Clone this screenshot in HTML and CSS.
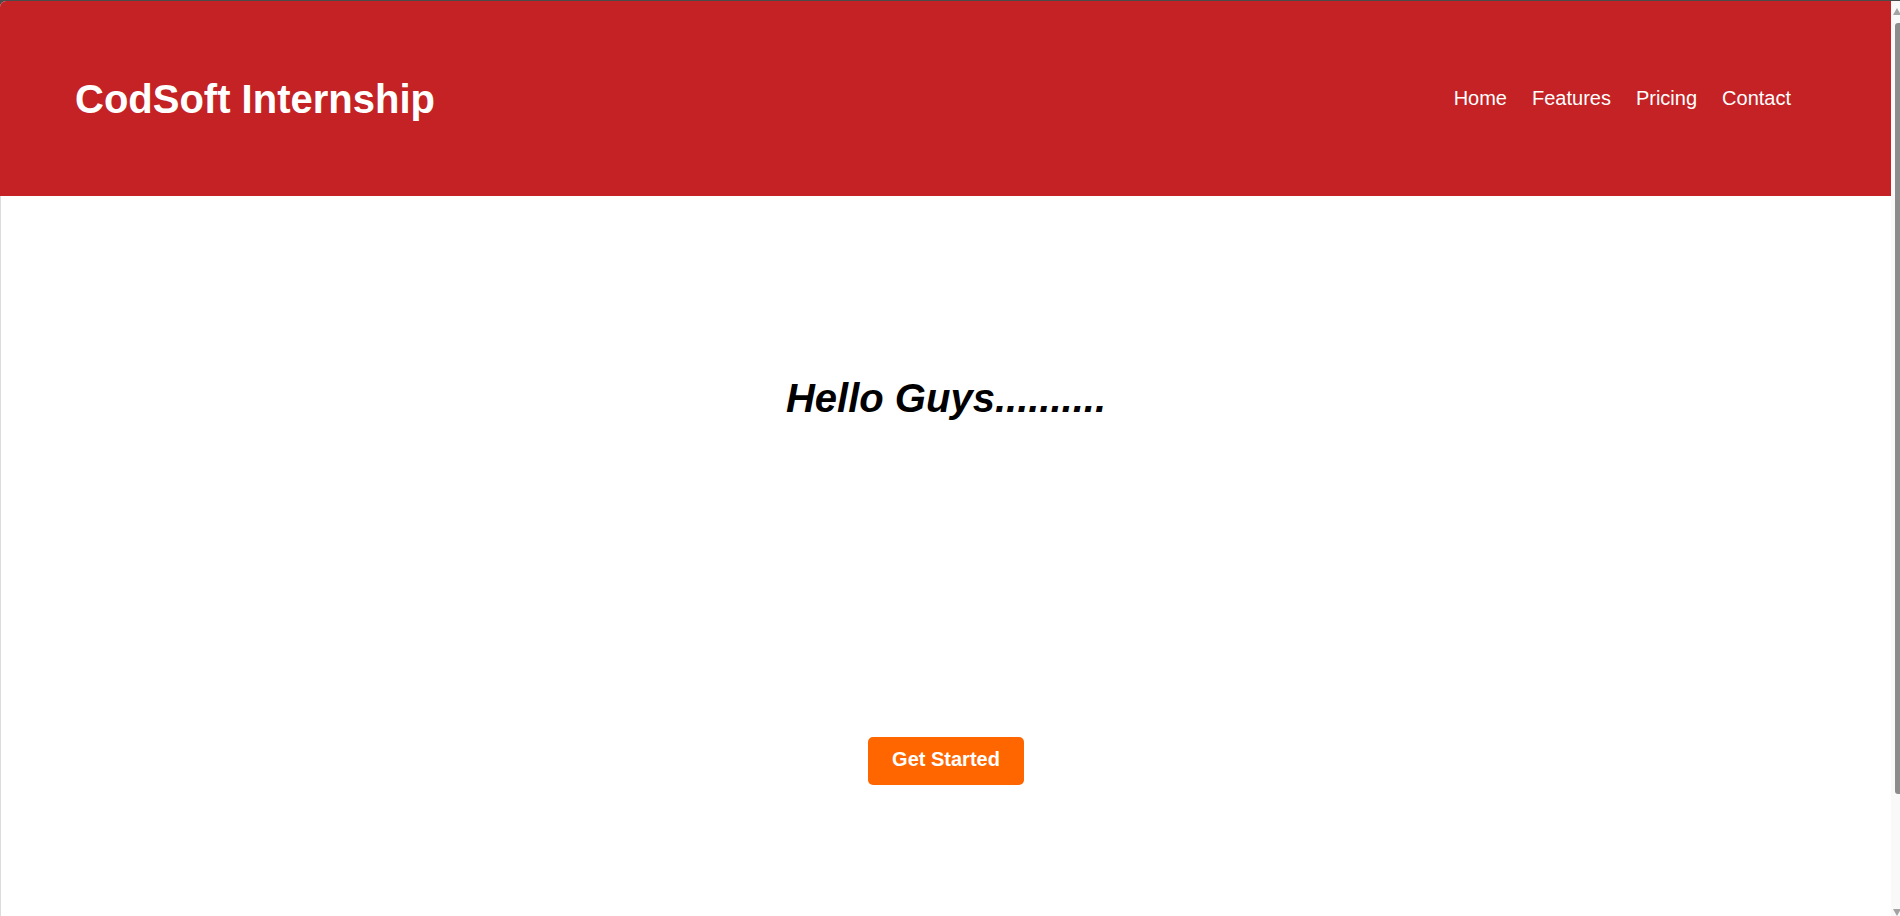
FILE: index.html
```html
<!DOCTYPE html>
<html lang="en">
<head>
<meta charset="utf-8">
<title>CodSoft Internship</title>
<link rel="stylesheet" href="styles.css">
</head>
<body>
<div class="window">
  <div class="page">
    <header class="site-header">
      <h2 class="brand">CodSoft Internship</h2>
      <nav class="nav">
        <a href="#">Home</a>
        <a href="#">Features</a>
        <a href="#">Pricing</a>
        <a href="#">Contact</a>
      </nav>
    </header>
    <main class="hero">
      <h1 class="hero-title">Hello Guys..........</h1>
      <a class="btn" href="#">Get Started</a>
    </main>
  </div>
  <div class="scrollbar">
    <span class="arrow arrow-up"></span>
    <span class="thumb"></span>
    <span class="arrow arrow-down"></span>
  </div>
</div>
</body>
</html>
```
FILE: styles.css
```css
html, body {
  margin: 0;
  height: 100%;
}

body {
  background: #4b4b4b;
  padding-top: 1px;
  box-sizing: border-box;
  font-family: "Liberation Sans", Arial, sans-serif;
  overflow: hidden;
}

.window {
  display: flex;
  height: 915px;
  background: #fff;
  border-top-left-radius: 6px;
  overflow: hidden;
}

.page {
  flex: 1;
  display: flex;
  flex-direction: column;
}

.site-header {
  height: 195px;
  background: #c42224;
  display: flex;
  align-items: center;
  justify-content: space-between;
  padding: 0 100px 0 75px;
}

.brand {
  margin: 0;
  font-size: 40px;
  font-weight: 700;
  line-height: 46px;
  color: #fff;
}

.nav {
  display: flex;
  gap: 25px;
}

.nav a {
  color: #fff;
  text-decoration: none;
  font-size: 20px;
  line-height: 23px;
}

.hero {
  flex: 1;
  border-left: 1px solid #dcdcdc;
  display: flex;
  flex-direction: column;
  align-items: center;
  padding-top: 179px;
}

.hero-title {
  margin: 0;
  font-size: 40px;
  font-style: italic;
  font-weight: 700;
  line-height: 46px;
  color: #000;
}

.btn {
  margin-top: 316px;
  background: #ff6600;
  color: #fff;
  font-size: 20px;
  font-weight: 700;
  line-height: 23px;
  padding: 11px 24.5px 14px;
  border-radius: 5px;
  text-decoration: none;
}

.scrollbar {
  width: 9px;
  background: #f9f9f9;
  display: flex;
  flex-direction: column;
  padding-top: 7px;
}

.arrow {
  width: 0;
  height: 0;
  margin-left: 2px;
  border-left: 4px solid transparent;
  border-right: 4px solid transparent;
}

.arrow-up {
  border-bottom: 7px solid #a3a3a3;
}

.arrow-down {
  margin-top: auto;
  border-top: 7px solid #a3a3a3;
}

.thumb {
  margin-top: 8px;
  margin-left: 4px;
  height: 771px;
  background: #8c8c8c;
  border-radius: 3px 0 0 3px;
}
```
